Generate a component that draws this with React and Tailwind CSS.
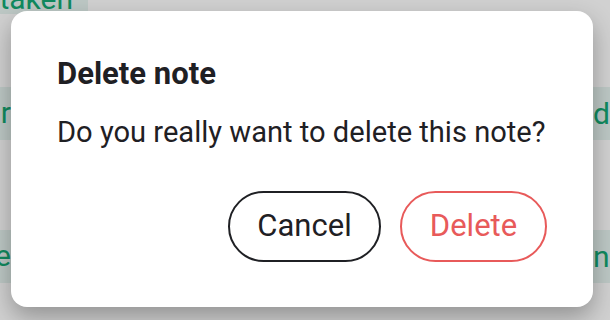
import React from "react";

export default function App() {
  const font = { fontFamily: "Roboto, 'Noto Sans', sans-serif" };
  return (
    <div className="relative w-[610px] h-[320px] overflow-hidden bg-[#d1d1d1]" style={font}>
      {/* backdrop page content */}
      <div className="flex flex-col">
        <div className="flex h-[54px] -mt-[40px]">
          <div className="w-[88px] bg-[#bdc8c5] flex items-end justify-end pr-[15px] pb-0 text-[30px] leading-none text-[#108a5f]">taken</div>
        </div>
        <div className="flex h-[53px] mt-[73px] justify-between">
          <div className="w-[11px] bg-[#bdc8c5] flex items-center justify-end text-[30px] leading-none text-[#108a5f] overflow-hidden">
            <span className="pb-[2px]">r</span>
          </div>
          <div className="w-[17px] bg-[#bdc8c5] flex items-center justify-start text-[30px] leading-none text-[#108a5f] overflow-hidden">
            <span>d</span>
          </div>
        </div>
        <div className="flex h-[53px] mt-[90px] justify-between">
          <div className="w-[11px] bg-[#bdc8c5] flex items-center justify-end text-[30px] leading-none text-[#108a5f] overflow-hidden">
            <span className="pb-[2px]">e</span>
          </div>
          <div className="w-[17px] bg-[#bdc8c5] flex items-center justify-start text-[30px] leading-none text-[#108a5f] overflow-hidden whitespace-nowrap">
            <span>nc</span>
          </div>
        </div>
      </div>

      {/* dialog */}
      <div className="absolute left-[11px] top-[11px] w-[582px] h-[296px] bg-white rounded-[16px] shadow-[0_10px_24px_rgba(0,0,0,0.3)] px-[46px] pt-[46px] flex flex-col">
        <div className="text-[31px] leading-[34px] font-bold text-[#1f2024] whitespace-nowrap">Delete note</div>
        <div className="mt-[24px] text-[29.1px] leading-[34px] text-[#1f2024] whitespace-nowrap">Do you really want to delete this note?</div>
        <div className="mt-[42px] flex justify-end gap-[19px]">
          <button className="w-[153px] h-[71px] rounded-full border-[2px] border-[#1f2024] text-[31px] text-[#1f2024] flex items-center justify-center">Cancel</button>
          <button className="w-[147px] h-[71px] rounded-full border-[2px] border-[#e85a5a] text-[31px] text-[#e85a5a] flex items-center justify-center">Delete</button>
        </div>
      </div>
    </div>
  );
}
